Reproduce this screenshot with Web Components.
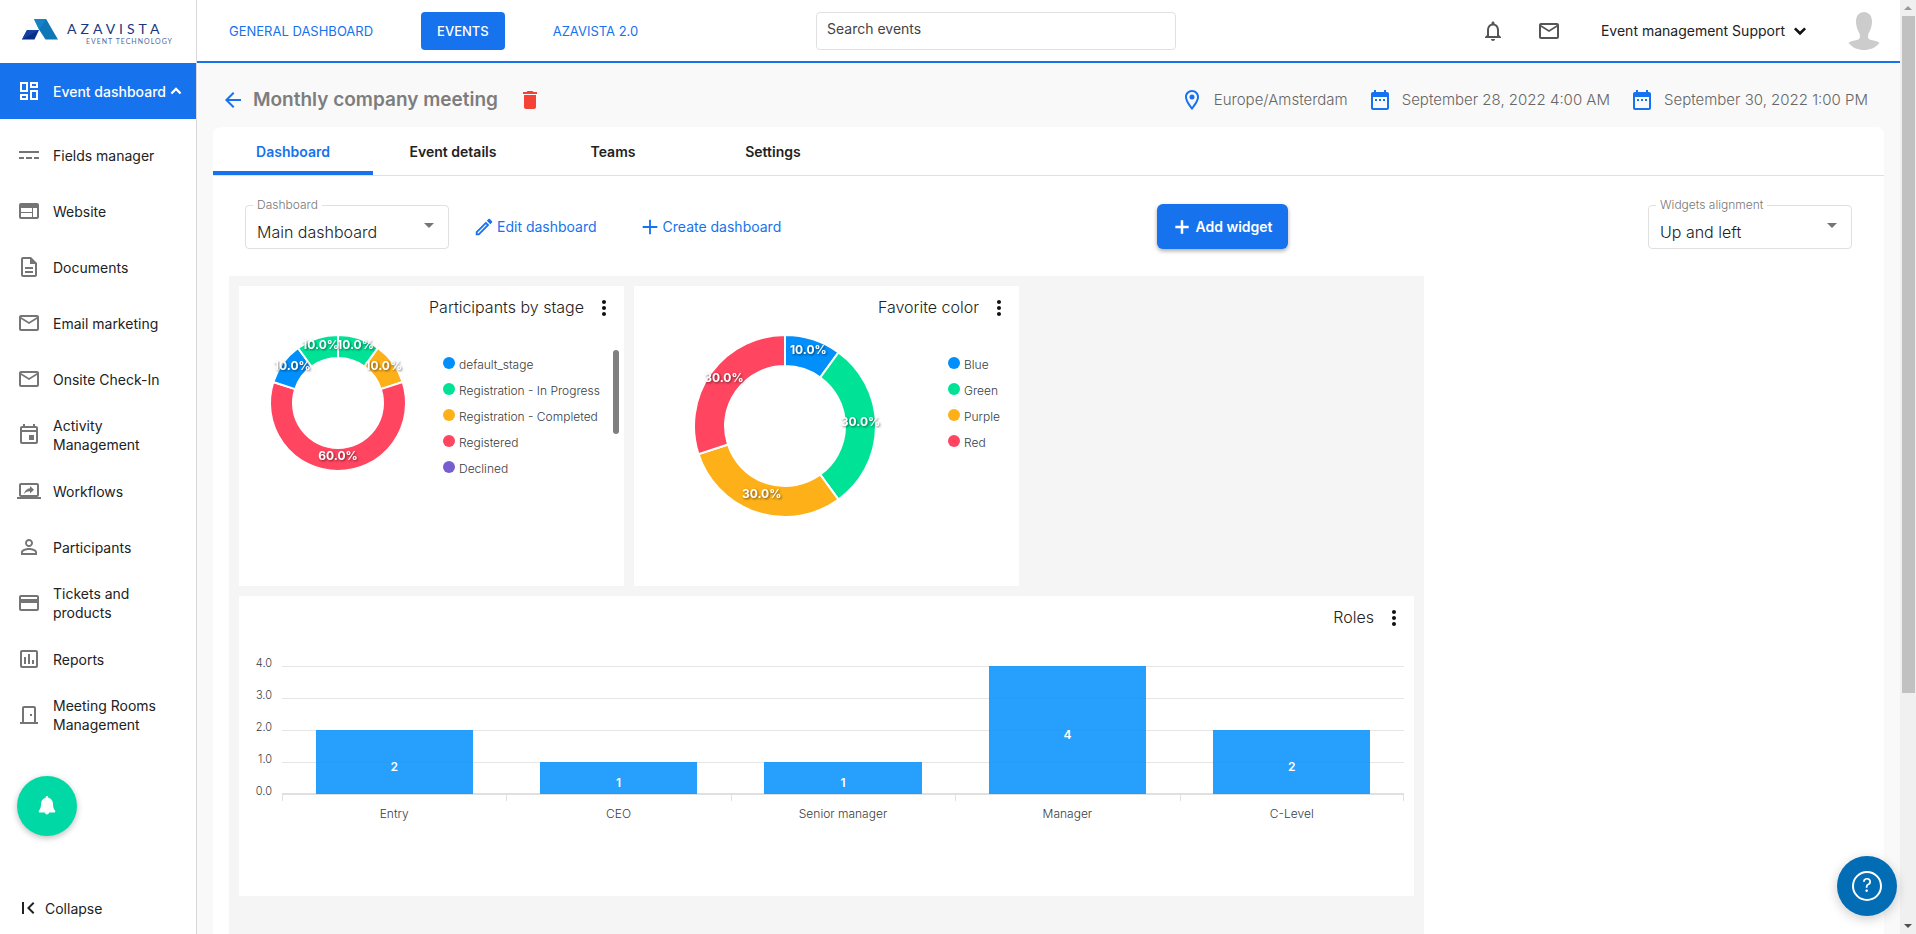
<!DOCTYPE html>
<html lang="en">
<head>
<meta charset="utf-8">
<meta name="viewport" content="width=device-width, initial-scale=1">
<title>Monthly company meeting</title>
<style>
  html, body { margin: 0; height: 100%; }
  body {
    font-family: Inter, "Open Sans", sans-serif;
    font-size: 14px;
    color: #222;
    background: #fff;
    --blue: #1672ed;
    --line: #e0e0e0;
    --muted: #7d7d7d;
  }
</style>
</head>
<body>
<az-app>
  <az-sidebar slot="side"></az-sidebar>
  <az-header slot="top"></az-header>
  <az-event-bar slot="page"></az-event-bar>
  <az-card slot="page">
    <az-tabs></az-tabs>
    <az-toolbar></az-toolbar>
    <az-board>
      <az-widget heading="Participants by stage"><az-donut kind="stages"></az-donut></az-widget>
      <az-widget heading="Favorite color"><az-donut kind="colors"></az-donut></az-widget>
      <az-widget heading="Roles" wide><az-bars></az-bars></az-widget>
    </az-board>
  </az-card>
  <az-scrollbar slot="scroll"></az-scrollbar>
  <az-help slot="help"></az-help>
</az-app>

<script>
const ICONS = {
  dashboard: 'M19 5v2h-4V5h4M9 5v6H5V5h4m10 8v6h-4v-6h4M9 17v2H5v-2h4M21 3h-8v6h8V3zM11 3H3v10h8V3zm10 8h-8v10h8V11zm-10 4H3v6h8v-6z',
  fields: 'M2 8h20v2H2zM2 14h5v2H2zM9 14h6v2H9zM17 14h5v2h-5z',
  web: 'M20 4H4c-1.1 0-1.99.9-1.99 2L2 18c0 1.1.9 2 2 2h16c1.1 0 2-.9 2-2V6c0-1.1-.9-2-2-2zm-5 14H4v-4h11v4zm0-5H4V9h11v4zm5 5h-4V9h4v9z',
  document: 'M8 16h8v2H8zm0-4h8v2H8zm6-10H6c-1.1 0-2 .9-2 2v16c0 1.1.89 2 1.99 2H18c1.1 0 2-.9 2-2V8l-6-6zm4 18H6V4h7v5h5v11z',
  mail: 'M22 6c0-1.1-.9-2-2-2H4c-1.1 0-2 .9-2 2v12c0 1.1.9 2 2 2h16c1.1 0 2-.9 2-2V6zm-2 0l-8 5-8-5h16zm0 12H4V8l8 5 8-5v10z',
  event: 'M19 3h-1V1h-2v2H8V1H6v2H5c-1.11 0-1.99.9-1.99 2L3 19c0 1.1.89 2 2 2h14c1.1 0 2-.9 2-2V5c0-1.1-.9-2-2-2zm0 16H5V9h14v10zM5 7V5h14v2H5zm7 5h5v5h-5z',
  workflow: 'M20 18c1.1 0 1.99-.9 1.99-2L22 6c0-1.11-.9-2-2-2H4c-1.11 0-2 .89-2 2v10c0 1.1.89 2 2 2H0v2h24v-2h-4zM4 16V6h16v10.01L4 16zm9-6.87c-3.89.54-5.44 3.2-6 5.87 1.39-1.87 3.22-2.72 6-2.72v2.19l4-3.74L13 7v2.13z',
  person: 'M12 5.9c1.16 0 2.1.94 2.1 2.1s-.94 2.1-2.1 2.1S9.9 9.16 9.9 8s.94-2.1 2.1-2.1m0 9c2.97 0 6.1 1.46 6.1 2.1v1.1H5.9V17c0-.64 3.13-2.1 6.1-2.1M12 4C9.79 4 8 5.79 8 8s1.79 4 4 4 4-1.79 4-4-1.79-4-4-4zm0 9c-2.67 0-8 1.34-8 4v3h16v-3c0-2.66-5.33-4-8-4z',
  card: 'M20 4H4c-1.11 0-1.99.89-1.99 2L2 18c0 1.11.89 2 2 2h16c1.11 0 2-.89 2-2V6c0-1.11-.89-2-2-2zm0 14H4v-6h16v6zm0-10H4V6h16v2z',
  report: 'M9 17H7v-7h2v7zm4 0h-2V7h2v10zm4 0h-2v-4h2v4zm2 2H5V5h14v14zm0-16H5c-1.1 0-2 .9-2 2v14c0 1.1.9 2 2 2h14c1.1 0 2-.9 2-2V5c0-1.1-.9-2-2-2z',
  door: 'M19 19V5c0-1.1-.9-2-2-2H7c-1.1 0-2 .9-2 2v14H3v2h18v-2h-2zm-2 0H7V5h10v14zm-4-8h2v2h-2z',
  bell: 'M12 22c1.1 0 2-.9 2-2h-4c0 1.1.89 2 2 2zm6-6v-5c0-3.07-1.64-5.64-4.5-6.32V4c0-.83-.67-1.5-1.5-1.5s-1.5.67-1.5 1.5v.68C7.63 5.36 6 7.92 6 11v5l-2 2v1h16v-1l-2-2zm-2 1H8v-6c0-2.48 1.51-4.5 4-4.5s4 2.02 4 4.5v6z',
  alarm: 'M12 2c-.8 0-1.3.6-1.3 1.3v.5C7.8 4.4 6 6.9 6 9.8c0 3.7-.6 5-2 6.600-.7.8-.3 2.1.9 2.1h5c.2 1.3 1 2 2.1 2s1.9-.7 2.1-2h5c1.2 0 1.6-1.3.9-2.1-1.4-1.6-2-2.9-2-6.600 0-2.9-1.8-5.4-4.7-6v-.5C13.3 2.6 12.8 2 12 2z',
  trash: 'M6 19c0 1.1.9 2 2 2h8c1.1 0 2-.9 2-2V7H6v12zM19 4h-3.5l-1-1h-5l-1 1H5v2h14V4z',
  back: 'M20 11H7.83l5.59-5.59L12 4l-8 8 8 8 1.41-1.41L7.83 13H20v-2z',
  pin: 'M12 2C8.13 2 5 5.13 5 9c0 5.25 7 13 7 13s7-7.75 7-13c0-3.87-3.13-7-7-7zM7 9c0-2.76 2.24-5 5-5s5 2.24 5 5c0 2.88-2.88 7.19-5 9.88C9.92 16.21 7 11.85 7 9zM12 6.5a2.5 2.5 0 1 0 0 5a2.5 2.5 0 1 0 0-5z',
  calendar: 'M9 11H7v2h2v-2zm4 0h-2v2h2v-2zm4 0h-2v2h2v-2zm2-7h-1V2h-2v2H8V2H6v2H5c-1.11 0-1.99.9-1.99 2L3 20c0 1.1.89 2 2 2h14c1.1 0 2-.9 2-2V6c0-1.1-.9-2-2-2zm0 16H5V9h14v11z',
  edit: 'M14.06 9.02l.92.92L5.92 19H5v-.92l9.06-9.06M17.66 3c-.25 0-.51.1-.7.29l-1.83 1.83 3.75 3.75 1.83-1.83c.39-.39.39-1.02 0-1.41l-2.34-2.34c-.2-.2-.45-.29-.71-.29zm-3.6 3.19L3 17.25V21h3.75L17.81 9.94l-3.75-3.75z',
  plus: 'M20 13h-7v7h-2v-7H4v-2h7V4h2v7h7v2z',
  plusBold: 'M20 13.5h-6.5V20h-3v-6.5H4v-3h6.5V4h3v6.5H20z',
  up: 'M12 7.5l-6.5 6.5 2 2 4.5-4.5 4.5 4.5 2-2z',
  down: 'M12 16.2l-6-6L7.8 8.4l4.2 4.2 4.2-4.2L18 10.2z',
  more: 'M12 8c1.1 0 2-.9 2-2s-.9-2-2-2-2 .9-2 2 .9 2 2 2zm0 2c-1.1 0-2 .9-2 2s.9 2 2 2 2-.9 2-2-.9-2-2-2zm0 6c-1.1 0-2 .9-2 2s.9 2 2 2 2-.9 2-2-.9-2-2-2z',
  collapse: 'M5 6h2v12H5zM17.4 7.4L16 6l-6 6 6 6 1.4-1.4L12.8 12z'
};

/* Registers an element whose shadow root is filled from a render function. */
function define(name, css, render) {
  customElements.define(name, class extends HTMLElement {
    connectedCallback() {
      if (this.shadowRoot) return;
      const t = document.createElement('template');
      t.innerHTML = `<style>:host,*{box-sizing:border-box}button{font:inherit;color:inherit;background:none;border:0;padding:0;cursor:pointer}a{color:inherit;text-decoration:none}${css}</style>${render(this)}`;
      this.attachShadow({ mode: 'open' }).append(t.content.cloneNode(true));
    }
  });
}

define('az-icon', `:host{display:block;flex:none;width:24px;height:24px}svg{display:block;width:100%;height:100%;fill:currentColor}`,
  el => `<svg viewBox="0 0 24 24" aria-hidden="true"><path fill-rule="${el.getAttribute('name') === 'pin' ? 'evenodd' : 'nonzero'}" d="${ICONS[el.getAttribute('name')]}"/></svg>`);

define('az-app', `
  :host{display:grid;grid-template-columns:197px minmax(0,1fr) 16px;height:100vh;overflow:hidden}
  .side{border-right:1px solid #d9d9d9;min-height:0}
  .main{background:#f9f9f9;min-height:0;overflow:hidden}
  .page{padding:0 16px}`,
  () => `<div class="side"><slot name="side"></slot></div>
  <div class="main"><slot name="top"></slot><div class="page"><slot name="page"></slot></div></div>
  <slot name="scroll"></slot><slot name="help"></slot>`);

define('az-logo', `:host{display:block}
  a{display:flex;gap:9px;height:63px;padding:19px 0 0 22px}
  svg{width:36px;height:21px;flex:none}
  .words{display:flex;flex-direction:column;align-items:flex-start;padding-top:2px;width:106px}
  b{font:400 14px/16px Lato,sans-serif;letter-spacing:4px;color:#17377f}
  small{font:400 7px/8px Lato,sans-serif;letter-spacing:1px;color:#5069a3;align-self:flex-end}`,
  () => `<a href="#" aria-label="Azavista event technology">
   <svg viewBox="0 0 36 21"><path fill="#0b2d86" d="M5 11h12l-4.500 9.500H0z"/><path fill="#143fa3" d="M5 11h12L0 20.500z"/><path fill="#1b8fd0" d="M12 0h12l5.500 10.500H17z"/><path fill="#0f76b8" d="M24 0l12 20.500H23.500L17 10.500z"/><path fill="#1583c5" d="M12 0h12l-7 10.500z"/></svg>
   <span class="words"><b>AZAVISTA</b><small>EVENT TECHNOLOGY</small></span></a>`);

const MENU = [['fields', 'Fields manager'], ['web', 'Website'], ['document', 'Documents'], ['mail', 'Email marketing'],
  ['mail', 'Onsite Check-In'], ['event', 'Activity Management'], ['workflow', 'Workflows'], ['person', 'Participants'],
  ['card', 'Tickets and products'], ['report', 'Reports'], ['door', 'Meeting Rooms Management']];

define('az-sidebar', `
  :host{display:flex;flex-direction:column;height:100%;line-height:19px}
  nav{display:flex;flex-direction:column}
  a{display:flex;align-items:center;gap:12px;height:56px;padding:0 36px 0 17px}
  a az-icon{color:#757575}
  .on{background:var(--blue);color:#fff;font-weight:500;padding-right:0;margin-bottom:8px;white-space:nowrap}
  .on az-icon{color:#fff}
  .on az-icon:last-child{width:20px;height:20px;margin-left:-12px}
  .notify{width:60px;height:60px;border-radius:50%;background:#00d9a6;color:#fff;margin:33px 0 0 17px;display:grid;place-items:center;box-shadow:0 2px 6px #0004}
  .collapse{display:flex;align-items:center;gap:4px;margin:60px 0 0 17px;height:24px;text-align:left}`,
  () => `<az-logo></az-logo><nav aria-label="Event">
    <a class="on" href="#"><az-icon name="dashboard"></az-icon>Event dashboard<az-icon name="up"></az-icon></a>
    ${MENU.map(([i, t]) => `<a href="#"><az-icon name="${i}"></az-icon><span>${t}</span></a>`).join('')}</nav>
    <button class="notify" aria-label="Notifications"><az-icon name="alarm"></az-icon></button>
    <button class="collapse"><az-icon name="collapse"></az-icon>Collapse</button>`);

define('az-header', `
  :host{display:flex;align-items:center;height:63px;padding-right:20px;background:#fff;border-bottom:2px solid var(--blue)}
  nav{display:flex;flex:603 1 0;color:var(--blue);padding-left:16px;white-space:nowrap;font-size:13px}
  nav a{display:flex;align-items:center;height:38px;padding:0 16px;border-radius:4px;margin-right:32px}
  nav a.on{background:var(--blue);color:#fff;font-weight:500}
  input{flex:none;width:360px;height:38px;border:1px solid var(--line);border-radius:4px;padding:0 10px 4px;font:inherit;color:#333;outline:0}
  input::placeholder{color:#444;opacity:1}
  .user{display:flex;flex:704 1 0;justify-content:flex-end;align-items:center}
  .user button{display:flex;align-items:center;color:#555}
  .user button+button{margin-left:32px}
  .user button.name{color:#222;gap:3px;margin-left:40px}
  .name az-icon{color:#111}
  svg{width:32px;height:38px;margin-left:36px}`,
  () => `<nav aria-label="Sections"><a href="#">GENERAL DASHBOARD</a><a class="on" href="#">EVENTS</a><a href="#">AZAVISTA 2.0</a></nav>
  <input type="search" aria-label="Search events" placeholder="Search events">
  <div class="user"><button aria-label="Notifications"><az-icon name="bell"></az-icon></button>
  <button aria-label="Messages"><az-icon name="mail"></az-icon></button>
  <button class="name">Event management Support<az-icon name="down"></az-icon></button>
  <svg viewBox="0 0 32 38" fill="#ccc" role="img" aria-label="Profile"><path d="M16 0c4.500 0 8 3.500 8 9.500 0 5-1.500 8.500-3.500 12-1 4-.5 5.500 2.500 6.500 3 .8 6.500 1 8.500 3C27 36 22 38 16 38S5 36 .5 31c2-2 5.500-2.200 8.500-3 3-1 3.500-2.500 2.500-6.500C9.500 18 8 14.500 8 9.500 8 3.500 11.500 0 16 0z"/></svg></div>`);

define('az-event-bar', `
  :host{display:flex;align-items:center;justify-content:space-between;height:64px;padding:9px 16px 0 8px;color:#666}
  .title,.facts,.facts span{display:flex;align-items:center}
  h1{margin:0 20px 0 8px;font-size:19px;font-weight:600;color:var(--muted);line-height:24px}
  .title button:first-child{color:var(--blue)}
  .title button:last-child{color:#f44336}
  .facts{gap:20px;font-size:15px;font-weight:300;line-height:20px}
  .facts span{gap:10px}
  .facts az-icon{color:var(--blue)}`,
  () => `<div class="title"><button aria-label="Back"><az-icon name="back"></az-icon></button><h1>Monthly company meeting</h1><button aria-label="Delete event"><az-icon name="trash"></az-icon></button></div>
  <div class="facts"><span><az-icon name="pin"></az-icon>Europe/Amsterdam</span><span><az-icon name="calendar"></az-icon>September 28, 2022 4:00 AM</span><span><az-icon name="calendar"></az-icon>September 30, 2022 1:00 PM</span></div>`);

define('az-card', `:host{display:block;background:#fff;border-radius:8px 8px 0 0}`, () => `<slot></slot>`);

define('az-tabs', `:host{display:flex;height:49px;border-bottom:1px solid var(--line)}
  button{width:160px;height:48px;font-weight:600;border-bottom:4px solid transparent;padding-top:4px}
  .on{color:var(--blue);border-bottom-color:var(--blue);border-radius:2px 2px 0 0}`,
  () => ['Dashboard', 'Event details', 'Teams', 'Settings'].map((t, i) => `<button role="tab" aria-selected="${!i}" class="${i ? '' : 'on'}">${t}</button>`).join(''));

define('az-select', `:host{display:block;position:relative;width:204px;height:44px}
  select{appearance:none;width:100%;height:44px;border:1px solid var(--line);border-radius:4px;background:#fff;padding:10px 40px 0 11px;font:300 16px/24px Inter,sans-serif;color:#222;outline:0}
  label{position:absolute;left:8px;top:-8px;padding:0 4px;background:#fff;font-size:12px;line-height:16px;font-weight:300;color:#777}
  i{position:absolute;right:15px;top:18px;border:5px solid transparent;border-top-color:#757575;border-bottom:0}`,
  el => `<label for="s">${el.getAttribute('label')}</label><select id="s"><option>${el.getAttribute('value')}</option></select><i></i>`);

define('az-toolbar', `:host{display:flex;align-items:center;padding:28px 32px 27px}
  .links{display:flex;gap:42px;margin-left:24px;flex:684 1 0;color:var(--blue)}
  .links button{display:flex;align-items:center;gap:2px}
  .links az-icon{width:22px;height:22px}
  .add{display:flex;align-items:center;justify-content:center;gap:3px;width:131px;height:45px;border-radius:6px;background:var(--blue);color:#fff;font-weight:600;box-shadow:0 2px 4px #0005}
  .add az-icon{width:20px;height:20px}
  .end{flex:360 1 0}`,
  () => `<az-select label="Dashboard" value="Main dashboard"></az-select>
  <div class="links"><button><az-icon name="edit"></az-icon>Edit dashboard</button><button><az-icon name="plus"></az-icon>Create dashboard</button></div>
  <button class="add"><az-icon name="plusBold"></az-icon>Add widget</button><div class="end"></div>
  <az-select label="Widgets alignment" value="Up and left"></az-select>`);

define('az-board', `:host{display:grid;grid-template-columns:repeat(3,minmax(0,1fr));gap:10px;align-content:start;max-width:1195px;min-height:800px;margin:0 16px;padding:10px;background:#f5f5f5}
  ::slotted([wide]){grid-column:1/-1}`, () => `<slot></slot>`);

define('az-widget', `:host{display:block;height:300px;background:#fff}
  header{display:flex;justify-content:flex-end;align-items:center;height:42px;padding-right:8px;gap:8px}
  h2{margin:0;font-size:16px;font-weight:300;line-height:20px}
  button{color:#111;padding-top:2px}`,
  el => `<header><h2>${el.getAttribute('heading')}</h2><button aria-label="Widget menu"><az-icon name="more"></az-icon></button></header><slot></slot>`);

const BLUE = '#008ffb', GREEN = '#00e396', AMBER = '#feb019', RED = '#ff4560', VIOLET = '#775dd0';
const DONUTS = {
  stages: { r: 68, hole: 45, left: 31, gap: 37, scroll: true,
    parts: [[10, GREEN], [10, AMBER], [60, RED], [10, BLUE], [10, GREEN]],
    legend: [['default_stage', BLUE], ['Registration - In Progress', GREEN], ['Registration - Completed', AMBER], ['Registered', RED], ['Declined', VIOLET]] },
  colors: { r: 91, hole: 60, left: 60, gap: 72,
    parts: [[10, BLUE], [30, GREEN], [30, AMBER], [30, RED]],
    legend: [['Blue', BLUE], ['Green', GREEN], ['Purple', AMBER], ['Red', RED]] }
};

function donut({ r, hole, parts }) {
  let at = 0, arcs = '', labels = '';
  const pt = (rad, share) => [r + rad * Math.sin(share * Math.PI / 50), r - rad * Math.cos(share * Math.PI / 50)].map(v => v.toFixed(2)).join(' ');
  for (const [n, c] of parts) {
    const end = at + n, big = n > 50 ? 1 : 0;
    arcs += `<path fill="${c}" stroke="#fff" stroke-width="2" d="M${pt(r, at)}A${r} ${r} 0 ${big} 1 ${pt(r, end)}L${pt(hole, end)}A${hole} ${hole} 0 ${big} 0 ${pt(hole, at)}z"/>`;
    const [x, y] = pt((r + hole) / 2, at + n / 2).split(' ');
    labels += `<text x="${x}" y="${y}">${n}.0%</text>`;
    at = end;
  }
  return `<svg width="${2 * r}" height="${2 * r}" role="img" aria-label="Donut chart">${arcs}${labels}</svg>`;
}

define('az-donut', `:host{display:block}
  .row{display:flex;align-items:flex-start;padding-right:5px}
  svg{flex:none;overflow:visible;margin-top:7px}
  text{font:700 12px Inter,sans-serif;fill:#fff;text-anchor:middle;filter:drop-shadow(1px 1px 1px #0008)}
  ul{list-style:none;margin:22px 0 0;padding:0;font-size:12px;font-weight:300;color:#373d3f;white-space:nowrap}
  li{display:flex;align-items:center;gap:4px;height:26px}
  li i{width:12px;height:12px;border-radius:50%}
  li span{padding-top:3px}
  .thumb{width:6px;height:84px;border-radius:3px;background:#808080;margin:22px 0 0 auto}`,
  el => {
    const d = DONUTS[el.getAttribute('kind')];
    return `<div class="row" style="padding-left:${d.left}px">${donut(d)}
    <ul style="margin-left:${d.gap}px">${d.legend.map(([t, c]) => `<li><i style="background:${c}"></i><span>${t}</span></li>`).join('')}</ul>
    ${d.scroll ? '<div class="thumb"></div>' : ''}</div>`;
  });

define('az-bars', `:host{display:grid;grid-template-columns:33px minmax(0,1fr);column-gap:10px;padding:28px 10px 0 0}
  .y{display:flex;flex-direction:column;justify-content:space-between;align-items:flex-end;height:144px;margin:-11px 0 -4px;font-size:11px;line-height:16px;font-weight:300;color:#373d3f}
  .plot{display:grid;grid-template-columns:repeat(5,1fr);height:129px;align-items:end;border-bottom:2px solid #e0e0e0;background:repeating-linear-gradient(#e6e6e6 0 1px,transparent 1px 32px)}
  .bar{margin:0 15%;display:grid;place-items:center;background:#008ffbd9;color:#fff;font-size:12px;font-weight:600;padding-top:8px}
  .x{grid-column:2;display:grid;grid-template-columns:repeat(5,1fr);text-align:center;font-size:12px;line-height:16px;font-weight:300;color:#373d3f}
  .x span{background:linear-gradient(#e0e0e0,#e0e0e0) 0 0/1px 6px no-repeat;padding-top:11px}
  .x span:last-child{background:linear-gradient(#e0e0e0,#e0e0e0) 0 0/1px 6px no-repeat,linear-gradient(#e0e0e0,#e0e0e0) 100% 0/1px 6px no-repeat}`,
  () => {
    const data = [['Entry', 2], ['CEO', 1], ['Senior manager', 1], ['Manager', 4], ['C-Level', 2]];
    return `<div class="y">${['4.0', '3.0', '2.0', '1.0', '0.0'].map(t => `<span>${t}</span>`).join('')}</div>
    <div class="plot">${data.map(d => `<div class="bar" style="height:${d[1] * 32}px">${d[1]}</div>`).join('')}</div>
    <div class="x">${data.map(d => `<span>${d[0]}</span>`).join('')}</div>`;
  });

define('az-scrollbar', `:host{display:flex;flex-direction:column;align-items:center;background:#f0f0f0;height:100vh}
  i{border:4px solid transparent;margin:0}
  .up{border-bottom-color:#999;border-top:0;margin:6px 0}
  .thumb{flex:677 1 0;width:13px;background:#c1c1c1}
  .rest{flex:225 1 0}
  .dn{border-top-color:#505050;border-bottom:0;margin:6px 0}`,
  () => `<i class="up"></i><div class="thumb"></div><div class="rest"></div><i class="dn"></i>`);

define('az-help', `:host{position:fixed;right:19px;bottom:18px}
  button{display:grid;place-items:center;width:60px;height:60px;border-radius:50%;background:#026cb4;color:#fff;box-shadow:0 3px 12px #0003}
  span{display:grid;place-items:center;width:30px;height:30px;border:2px solid #fff;border-radius:50%;font-size:19px;line-height:24px}`,
  () => `<button aria-label="Help"><span>?</span></button>`);
</script>
</body>
</html>
